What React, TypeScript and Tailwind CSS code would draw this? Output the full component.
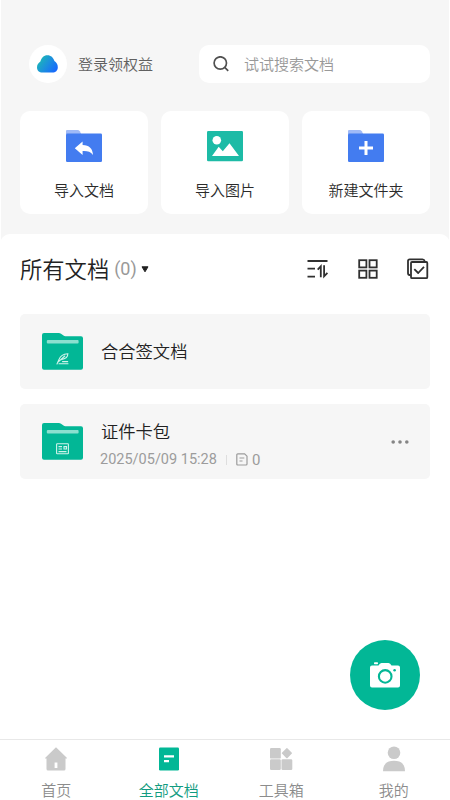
import React from "react";

const FONT = "font-['Roboto','Noto_Sans_CJK_SC',sans-serif]";

function BlueFolder({ children }: { children: React.ReactNode }) {
  return (
    <svg width="36" height="32" viewBox="0 0 36 32">
      <path d="M1 0H11.5Q13 0 13.8 1.2L15.2 4H0V1Q0 0 1 0Z" fill="#a0baf7" />
      <rect x="0" y="3.4" width="36" height="28.6" rx="1.3" fill="#437cf0" />
      {children}
    </svg>
  );
}

function ImportDocIcon() {
  return (
    <BlueFolder>
      <path d="M8.8 18.2L16.6 11.4V15C23.4 15.2 26.6 18.6 27 25C24.4 21.6 21.4 20.9 16.6 21.1V25Z" fill="#fff" />
    </BlueFolder>
  );
}

function NewFolderIcon() {
  return (
    <BlueFolder>
      <path d="M18 11V25M11 18H25" stroke="#fff" strokeWidth="3" />
    </BlueFolder>
  );
}

function ImportPictureIcon() {
  return (
    <svg width="36" height="32" viewBox="0 0 36 32">
      <rect x="0" y="1" width="36" height="30.3" rx="1.3" fill="#1dbba6" />
      <circle cx="9.8" cy="10.3" r="4.3" fill="#fff" />
      <path d="M5 26L11.7 16.8L15.8 21.3L22.5 13.2L32 26Z" fill="#fff" />
    </svg>
  );
}

function GreenFolder({ children }: { children: React.ReactNode }) {
  return (
    <svg width="41" height="37" viewBox="0 0 41 37" className="ml-[22px] shrink-0">
      <path d="M2 0H16.8Q18 0 19 .8L21.5 2.6Q22.3 3.2 23.3 3.2H39Q41 3.2 41 5.2V34.7Q41 36.7 39 36.7H2Q0 36.7 0 34.7V2Q0 0 2 0Z" fill="#02b796" />
      <rect x="4.8" y="7" width="31.8" height="3.4" rx="1" fill="#8be0cf" />
      {children}
    </svg>
  );
}

function Card({ icon, label }: { icon: React.ReactNode; label: string }) {
  return (
    <div className="flex h-[103px] flex-1 flex-col items-center rounded-[10px] bg-white pt-[19px] text-[15px] leading-[22px] text-[#2b2b2b]">
      {icon}
      <span className="mt-[18px]">{label}</span>
    </div>
  );
}

function Tab({ icon, label, active = false }: { icon: React.ReactNode; label: string; active?: boolean }) {
  return (
    <div className={`flex flex-1 flex-col items-center pt-1.5 text-[15px] leading-5 ${active ? "text-[#119b80]" : "text-[#8c8c8c]"}`}>
      {icon}
      <span className="mt-[9px]">{label}</span>
    </div>
  );
}

export default function App() {
  return (
    <div className={`relative flex h-[800px] w-[450px] flex-col overflow-hidden bg-white font-[350] ${FONT}`}>
      <header className="mx-px h-[246px] bg-[#f6f6f6] px-[19px] pt-[45px]">
        <div className="flex h-[38px] items-center">
          <div className="ml-[9px] flex size-[38px] items-center justify-center rounded-full bg-white">
            <svg width="22" height="18" viewBox="0 0 22 18">
              <defs>
                <linearGradient id="cloud" x1="0" y1=".2" x2="1" y2=".8">
                  <stop offset="0" stopColor="#1bbdb0" />
                  <stop offset=".5" stopColor="#1c91dc" />
                  <stop offset="1" stopColor="#1766ff" />
                </linearGradient>
              </defs>
              <path d="M5.4 17.6C2.2 17.6 0 15.5 0 12.4C0 9.8 1.3 8 3.4 6.6C4.4 2.8 6.7 .3 10.4 .3C14 .3 16.3 2.6 17.4 6C19.7 7.4 20.8 9.6 20.8 12.2C20.8 15.4 18.6 17.6 15.4 17.6Z" fill="url(#cloud)" />
            </svg>
          </div>
          <span className="mt-0.5 ml-[11px] text-[15px] leading-[22px] text-[#606060]">登录领权益</span>
          <div className="ml-auto flex h-[38px] w-[231px] items-center rounded-[10px] bg-white pl-[14px]">
            <svg width="17" height="17" viewBox="0 0 17 17" fill="none" stroke="#505050" strokeWidth="1.7">
              <circle cx="7.3" cy="7" r="6.2" />
              <path d="M11.7 11.4L15.2 14.9" />
            </svg>
            <span className="mt-0.5 ml-[14px] text-[15px] leading-[22px] text-[#999]">试试搜索文档</span>
          </div>
        </div>
        <div className="mt-7 flex gap-[13px]">
          <Card icon={<ImportDocIcon />} label="导入文档" />
          <Card icon={<ImportPictureIcon />} label="导入图片" />
          <Card icon={<NewFolderIcon />} label="新建文件夹" />
        </div>
      </header>

      <main className="-mt-3 flex-1 rounded-t-[10px] bg-white px-5">
        <div className="flex h-[70px] items-center">
          <h1 className="mt-0.5 text-[22.3px] leading-8 text-[#222]">所有文档</h1>
          <span className="ml-[5px] text-[18px] leading-6 font-normal text-[#999]">(0)</span>
          <svg width="8" height="7" viewBox="0 0 8 7" className="ml-1">
            <path d="M1 .8H7L4 5.8Z" fill="#222" stroke="#222" strokeLinejoin="round" />
          </svg>
          <div className="mr-px ml-auto flex items-center text-[#303030]">
            <svg width="22" height="20" viewBox="0 0 22 20" fill="none" stroke="currentColor" strokeWidth="1.8">
              <path d="M.5 2H20.5M.5 9.7H8M.5 17.7H8" />
              <path d="M10.7 10.7L13.8 7.3V18.3M17.1 6.3V17.3L20.4 13.8" />
            </svg>
            <svg width="20" height="20" viewBox="0 0 20 20" fill="none" stroke="currentColor" strokeWidth="1.8" className="ml-[29px]">
              <rect x="1.2" y="1.2" width="7.2" height="7.2" />
              <rect x="11.5" y="1.2" width="7.2" height="7.2" />
              <rect x="1.2" y="11.6" width="7.2" height="7.2" />
              <rect x="11.5" y="11.6" width="7.2" height="7.2" />
            </svg>
            <svg width="22" height="22" viewBox="0 0 22 22" fill="none" stroke="currentColor" strokeWidth="1.8" strokeLinejoin="round" className="ml-[29px]">
              <path d="M3.5 17H2.6Q1 17 1 15.3V3Q1 1.4 2.7 1.4H15.5Q17.3 1.4 17.8 3.5" />
              <rect x="4" y="4" width="16.3" height="16.2" rx="1" />
              <path d="M7.3 11.2L11.2 15L17 8.9" />
            </svg>
          </div>
        </div>

        <div className="mt-[10px] flex h-[75px] items-center rounded-[5px] bg-[#f6f6f6]">
          <GreenFolder>
            <path d="M15 31L17.2 26C18.2 23.2 21.6 21 25.8 20.7C26 23.6 23.5 25.8 19 26.6M16.6 28.6L22.8 23M17 30.8H26M20.5 28.6H25.7" fill="none" stroke="#d0f3eb" strokeWidth="1.1" strokeLinecap="round" />
          </GreenFolder>
          <span className="mt-px ml-[18px] text-[17.3px] leading-6 text-[#222]">合合签文档</span>
        </div>

        <div className="mt-[15px] flex h-[75px] items-center rounded-[5px] bg-[#f6f6f6]">
          <GreenFolder>
            <g fill="none" stroke="#d0f3eb" strokeWidth="1.1">
              <rect x="14.6" y="20.8" width="11.8" height="10" rx=".6" />
              <path d="M16.5 23.6H20M16.5 26H20M16.5 28.6H24.5M22 23.6H24.5V26H22Z" />
            </g>
          </GreenFolder>
          <div className="ml-[17px] flex flex-col pt-[9px]">
            <span className="ml-px text-[17.3px] leading-6 text-[#222]">证件卡包</span>
            <div className="mt-[3px] flex items-center text-[15px] leading-6 font-normal text-[#9c9c9c]">
              <span className="mt-px w-[117px] text-[14.5px] whitespace-nowrap">2025/05/09 15:28</span>
              <span className="ml-[9px] h-[10px] w-px bg-[#dedede]" />
              <svg width="12" height="13" viewBox="0 0 12 13" fill="none" stroke="currentColor" strokeWidth="1.2" className="ml-[9px]">
                <path d="M1.8.8H8.6L11 3.2V11Q11 12 10 12H1.8Q.8 12 .8 11V1.8Q.8.8 1.8.8ZM3.5 5H8.3M3.5 8H6.5" />
              </svg>
              <span className="ml-1">0</span>
            </div>
          </div>
          <svg width="18" height="4" viewBox="0 0 18 4" fill="#858585" className="mr-[21px] ml-auto">
            <circle cx="2.2" cy="2" r="1.8" />
            <circle cx="9" cy="2" r="1.8" />
            <circle cx="15.8" cy="2" r="1.8" />
          </svg>
        </div>
      </main>

      <button className="absolute top-[640px] left-[350px] flex size-[70px] items-center justify-center rounded-full bg-[#02b796]">
        <svg width="30" height="26" viewBox="0 0 30 26">
          <path d="M2 3.6H8.5Q9.7 1 11.5 1H18.5Q20.3 1 21.5 3.6H28Q30 3.6 30 5.6V23.5Q30 25.5 28 25.5H2Q0 25.5 0 23.5V5.6Q0 3.6 2 3.6Z" fill="#fff" />
          <rect x="4" y=".3" width="4" height="2" rx=".7" fill="#fff" />
          <circle cx="15.2" cy="14.4" r="6.3" fill="none" stroke="#02b796" strokeWidth="2.1" />
          <circle cx="24.6" cy="8.3" r="1.3" fill="#02b796" />
        </svg>
      </button>

      <nav className="flex h-[61px] shrink-0 border-t border-[#e8e8e8] bg-white">
        <Tab
          label="首页"
          icon={
            <svg width="24" height="26" viewBox="0 0 24 26" className="shrink-0">
              <path d="M12 1.3L22.8 11.8Q23.3 12.5 22.4 12.5H21.5V23Q21.5 24.5 20 24.5H4Q2.5 24.5 2.5 23V12.5H1.6Q.7 12.5 1.3 11.8ZM10.6 16.5V22H13.4V16.5Z" fill="#cacaca" fillRule="evenodd" />
            </svg>
          }
        />
        <Tab
          active
          label="全部文档"
          icon={
            <svg width="24" height="26" viewBox="0 0 24 26" className="shrink-0">
              <rect x="2" y="1.5" width="20" height="23" rx="1.2" fill="#02b796" />
              <path d="M7 10.3H17M7 15.2H12" stroke="#fff" strokeWidth="2.3" />
            </svg>
          }
        />
        <Tab
          label="工具箱"
          icon={
            <svg width="24" height="26" viewBox="0 0 24 26" fill="#cacaca" className="shrink-0">
              <rect x="1" y="2" width="10.8" height="10.6" rx="1.2" />
              <rect x="1" y="13.2" width="10.8" height="10.8" rx="1.2" />
              <rect x="12.5" y="13.2" width="10.8" height="10.8" rx="1.2" />
              <rect x="14.1" y="3.4" width="7.6" height="7.6" rx=".6" transform="rotate(45 17.9 7.2)" />
            </svg>
          }
        />
        <Tab
          label="我的"
          icon={
            <svg width="24" height="26" viewBox="0 0 24 26" fill="#cacaca" className="shrink-0">
              <circle cx="12" cy="6.7" r="6.3" />
              <path d="M1 25C1 18 5 14.7 12 14.7S23 18 23 25Q23 25.3 22.6 25.3H1.4Q1 25.3 1 25Z" />
            </svg>
          }
        />
      </nav>
    </div>
  );
}
